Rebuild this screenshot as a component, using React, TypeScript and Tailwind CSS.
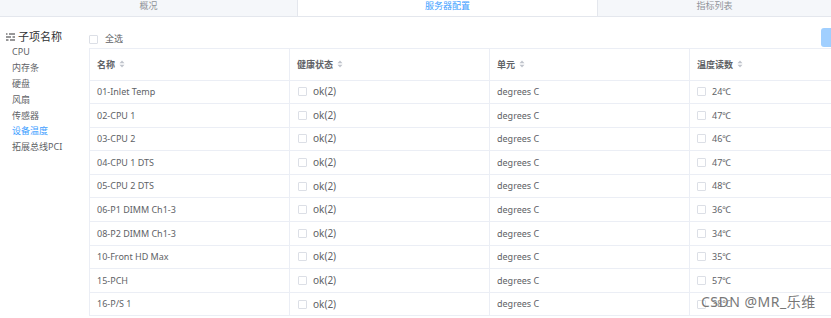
import React from "react";

const rows = [
  ["01-Inlet Temp", "24℃"],
  ["02-CPU 1", "47℃"],
  ["03-CPU 2", "46℃"],
  ["04-CPU 1 DTS", "47℃"],
  ["05-CPU 2 DTS", "48℃"],
  ["06-P1 DIMM Ch1-3", "36℃"],
  ["08-P2 DIMM Ch1-3", "34℃"],
  ["10-Front HD Max", "35℃"],
  ["15-PCH", "57℃"],
  ["16-P/S 1", "38℃"],
];

const side = ["CPU", "内存条", "硬盘", "风扇", "传感器", "设备温度", "拓展总线PCI"];

function Sort() {
  return (
    <svg width="6" height="8" viewBox="0 0 6 8" className="ml-[4px] inline-block">
      <path d="M3 0.5 L5.5 3.2 H0.5 Z" fill="#c0c4cc" />
      <path d="M3 7.5 L5.5 4.8 H0.5 Z" fill="#c0c4cc" />
    </svg>
  );
}

function Box() {
  return <span className="inline-block w-[9px] h-[9px] border border-[#dcdfe6] rounded-[1px] bg-white shrink-0" />;
}

export default function App() {
  return (
    <div
      className="w-[831px] h-[318px] overflow-hidden bg-white relative text-[#606266]"
      style={{ fontFamily: '"Noto Sans", "Noto Sans CJK SC", sans-serif' }}
    >
      <div className="flex h-[17px] border-b border-[#e4e7ed] text-[9px] leading-[12px]">
        <div className="w-[297px] bg-[#f5f7fa] text-[#909399] flex justify-center">概况</div>
        <div className="w-[301px] bg-white text-[#409eff] flex justify-center border-l border-r border-[#e4e7ed]">服务器配置</div>
        <div className="flex-1 bg-[#f5f7fa] text-[#909399] flex justify-center">指标列表</div>
      </div>
      <div className="flex">
        <div className="w-[89px] shrink-0 pl-[6px] pt-[12px]">
          <div className="flex items-center gap-[3px] text-[11px] leading-[15px] text-[#303133]">
            <svg width="9" height="8" viewBox="0 0 9 8">
              <path d="M0 1 H1.5 M3 1 H9 M0 4 H5 M6.5 4 H9 M0 7 H2.5 M4 7 H9" stroke="#303133" strokeWidth="1" />
            </svg>
            <span>子项名称</span>
          </div>
          <div className="pl-[6px] text-[9px]">
            {side.map((s) => (
              <div key={s} className={`h-[15.9px] leading-[15.9px] ${s === "设备温度" ? "text-[#409eff]" : "text-[#606266]"}`}>
                {s}
              </div>
            ))}
          </div>
        </div>
        <div className="flex-1 min-w-0 relative">
          <div className="h-[31px] flex items-center gap-[7px] pt-[14px] pb-[1px]">
            <Box />
            <span className="text-[9px] text-[#606266]">全选</span>
          </div>
          <div className="absolute right-0 top-[11px] w-[10px] h-[19px] bg-[#a0cfff] rounded-l-[3px]" />
          <div className="w-[820px] border-t border-l border-[#ebeef5] text-[9px]">
            <div className="flex h-[31.5px] border-b border-[#ebeef5] font-semibold text-[#606266]">
              {["名称", "健康状态", "单元", "温度读数"].map((h) => (
                <div key={h} className="w-[200px] border-r border-[#ebeef5] pl-[7px] flex items-center">
                  {h}
                  <Sort />
                </div>
              ))}
            </div>
            {rows.map(([n, t]) => (
              <div key={n} className="flex h-[23.6px] border-b border-[#ebeef5]">
                <div className="w-[200px] border-r border-[#ebeef5] pl-[7px] flex items-center">{n}</div>
                <div className="w-[200px] border-r border-[#ebeef5] pl-[8px] flex items-center gap-[6px]">
                  <Box />
                  <span className="text-[10px]">ok(2)</span>
                </div>
                <div className="w-[200px] border-r border-[#ebeef5] pl-[7px] flex items-center">degrees C</div>
                <div className="w-[200px] border-r border-[#ebeef5] pl-[7px] flex items-center gap-[6px]">
                  <Box />
                  <span>{t}</span>
                </div>
              </div>
            ))}
          </div>
        </div>
      </div>
      <div
        className="absolute left-[701px] top-[292px] text-[14px] leading-[20px] text-[#777777] tracking-[0.5px]"
        style={{ textShadow: "0 0 2px #fff" }}
      >
        CSDN @MR_乐维
      </div>
    </div>
  );
}
